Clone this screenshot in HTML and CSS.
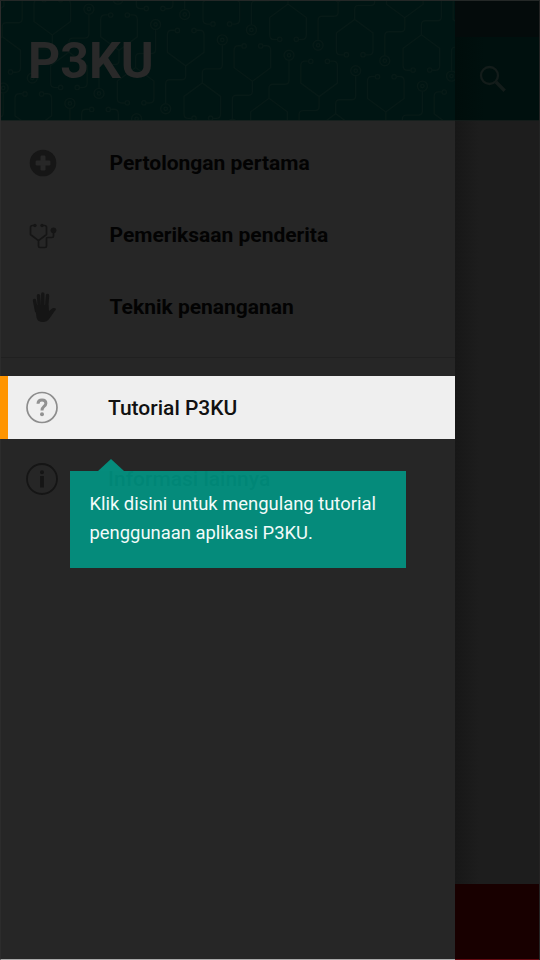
FILE: index.html
```
<!DOCTYPE html>
<html lang="id">
<head>
<meta charset="utf-8">
<title>P3KU</title>
<link rel="stylesheet" href="styles.css">
</head>
<body>
<div class="screen">
  <aside class="drawer">
    <header class="drawer-header">
      <svg class="pattern" viewBox="0 0 455 119" width="455" height="119" aria-hidden="true">
        <defs>
          <g id="steth">
            <path d="M-10.5-35.5H-14Q-18.3-35.5-18.3-31V-13.500L0 0L18.300-13.500V-31Q18.300-35.500 14-35.500H10.500M0 0V10Q0 14-4 14H-16Q-20 14-20 18V38"/>
            <circle cx="-8.300" cy="-35.300" r="2.200"/><circle cx="8.300" cy="-35.300" r="2.200"/>
            <circle cx="-20" cy="43" r="5"/><circle cx="-20" cy="43" r="1.700"/>
          </g>
          <g id="cell">
            <use href="#steth" x="52.300" y="34"/>
            <use href="#steth" transform="translate(68.900 51.100) rotate(180)"/>
          </g>
          <g id="row">
            <use href="#cell" x="-133.400" y="-30.800"/><use href="#cell" x="-66.700" y="-15.400"/><use href="#cell"/>
            <use href="#cell" x="66.700" y="15.400"/><use href="#cell" x="133.400" y="30.800"/>
            <use href="#cell" x="200.100" y="46.200"/><use href="#cell" x="266.800" y="61.600"/>
            <use href="#cell" x="333.500" y="77"/><use href="#cell" x="400.200" y="92.400"/>
          </g>
        </defs>
        <use href="#row" x="19" y="-94.300"/><use href="#row"/><use href="#row" x="-19" y="94.300"/>
      </svg>
      <h1 class="brand">P3KU</h1>
    </header>
    <nav class="menu">
      <a class="item">
        <svg class="icon" viewBox="0 0 36 36"><circle cx="19" cy="18" r="13.300" fill="#161616"/><g fill="#272727"><rect x="16.500" y="10.600" width="5" height="14.800" rx="1.200"/><rect x="11.600" y="15.500" width="14.800" height="5" rx="1.200"/></g></svg>
        <span>Pertolongan pertama</span>
      </a>
      <a class="item">
        <svg class="icon" viewBox="0 0 36 36" fill="none" stroke="#151515" stroke-width="1.700" stroke-linejoin="round"><path d="M11 8.500H8.500Q6.500 8.500 6.500 10.500V17.500L14.500 23.700L22.500 17.500V10.500Q22.500 8.500 20.500 8.500H18M14.500 23.700V29Q14.500 30.500 16 30.500H21Q22.500 30.500 22.500 29V21.500Q22.500 20.500 23.500 20.500H28Q29.500 20.500 29.500 19V15"/><g fill="#151515" stroke="none"><circle cx="11" cy="8.500" r="1.700"/><circle cx="18" cy="8.500" r="1.700"/><circle cx="29.500" cy="13.300" r="2.900"/></g></svg>
        <span>Pemeriksaan penderita</span>
      </a>
      <a class="item">
        <svg class="icon" viewBox="0 0 36 36"><path d="M10.500 11.500L12.500 22M14.500 6.700L15.500 20M18.800 5V20M23.500 6.500L22.500 20" stroke="#151515" stroke-width="3.400" stroke-linecap="round"/><path d="M11 16H24.300L25 22L28.500 19.300Q30.500 18.600 31.900 19.700Q32.200 20.700 30.500 22.300L25.500 29.500Q23 33 19 33Q13.500 33 12.500 28.500Z" fill="#151515"/></svg>
        <span>Teknik penanganan</span>
      </a>
      <hr class="divider">
      <a class="item current">
        <svg class="icon ring" viewBox="0 0 36 36"><circle cx="18" cy="17.500" r="15" fill="none" stroke="#8d8d8d" stroke-width="1.700"/><path d="M14 13.700Q14.100 10 18 10Q21.900 10 21.900 13.300Q21.900 15 19.800 16.600Q18 18 18 20.500" fill="none" stroke="#929292" stroke-width="3"/><circle cx="18" cy="24.300" r="2" fill="#929292"/></svg>
        <span>Tutorial P3KU</span>
      </a>
      <a class="item info">
        <svg class="icon ring" viewBox="0 0 36 36"><circle cx="18" cy="18" r="15" fill="none" stroke="#151515" stroke-width="1.800"/><circle cx="18" cy="11.300" r="2" fill="#151515"/><path d="M18 15V26.500" stroke="#151515" stroke-width="3.700"/></svg>
        <span>Informasi lainnya</span>
      </a>
    </nav>
    <div class="tooltip">Klik disini untuk mengulang tutorial penggunaan aplikasi P3KU.</div>
  </aside>
  <main class="page">
    <div class="status"></div>
    <div class="toolbar">
      <svg width="28" height="28" viewBox="0 0 28 28" fill="none" stroke="#131c1a"><circle cx="10.500" cy="10.500" r="8.500" stroke-width="2.300"/><path d="M17 17L25.700 25.700" stroke-width="3.400"/></svg>
    </div>
    <div class="content"></div>
    <div class="action"></div>
  </main>
</div>
</body>
</html>
```
FILE: styles.css
```
* { box-sizing: border-box; }
body { margin: 0; background: #262626; font-family: Roboto, "Liberation Sans", sans-serif; }
.screen { display: flex; width: 540px; height: 960px; overflow: hidden; border-top: 1px solid #242827; }
.drawer { position: relative; width: 455px; background: #262626; border-left: 1px solid #2c2c2c; border-bottom: 1px solid #aaa; }
.drawer-header { position: relative; height: 120px; padding: 31px 0 0 27px; background: #001513; border-bottom: 1px solid #17201e; overflow: hidden; }
.pattern { position: absolute; left: -1px; top: 0; fill: none; stroke: #071a17; stroke-width: 1.400; }
.brand { position: relative; margin: 0; font-size: 50px; line-height: 58px; font-weight: 700; color: #292929; }
.menu { display: flex; flex-direction: column; padding-top: 6px; }
.item { display: flex; align-items: center; gap: 49.500px; height: 72px; padding-left: 23px; color: #030303; font-size: 21px; font-weight: 700; white-space: nowrap; }
.icon { width: 36px; height: 36px; flex: none; }
.divider { width: 100%; height: 1px; margin: 14px 0 18px; border: 0; background: #202020; }
.current { height: 63px; margin-left: -1px; padding-left: 16px; gap: 48px; background: #efefef; border-left: 8px solid #ff9500; font-weight: 500; color: #111; }
.info { height: 80px; gap: 48px; font-weight: 500; }
.tooltip { position: absolute; left: 69px; top: 470px; width: 336px; height: 97px; padding: 18px 19.500px; background: rgba(0,157,139,.85); color: #f2fbfa; font-size: 18.400px; line-height: 29px; }
.tooltip::before { content: ""; position: absolute; left: 28px; bottom: 100%; border: 13px solid transparent; border-top: 0; border-bottom: 12.500px solid #058c7c; }
.page { display: flex; flex-direction: column; flex: 1; background: #1d1d1d; border-right: 1px solid #242424; }
.status { height: 36px; background: #040b0b; }
.toolbar { display: flex; align-items: center; height: 84px; padding-left: 24px; background: linear-gradient(90deg, #000d0b, #00100e 30px); border-bottom: 1px solid #131b19; }
.content { flex: 1; background: linear-gradient(90deg, #171717, #1d1d1d 24px); }
.action { height: 76px; background: #180000; border-bottom: 1px solid #650a12; }
```
